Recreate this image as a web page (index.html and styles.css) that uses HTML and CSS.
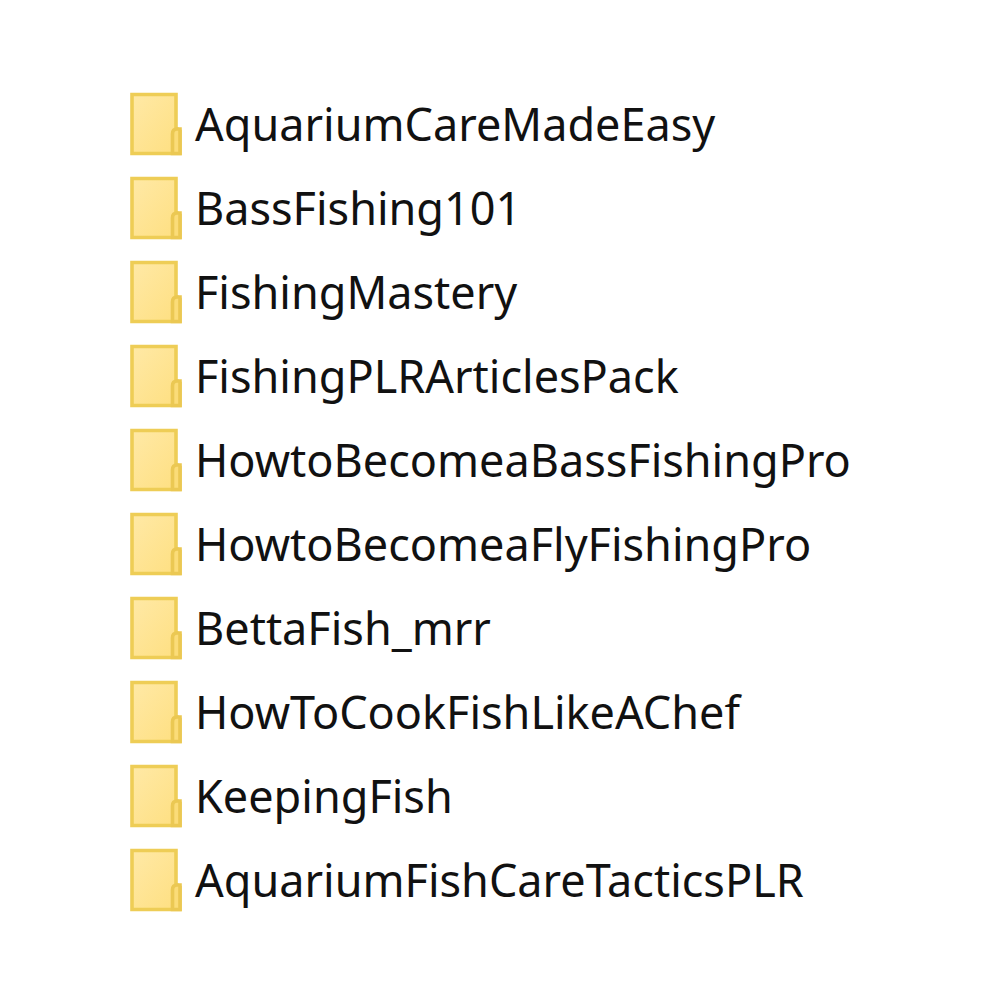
FILE: index.html
```
<!DOCTYPE html>
<html lang="en">
<head>
    <meta charset="UTF-8">
    <title>Folders</title>
    <link rel="stylesheet" href="styles.css">
</head>
<body>
    <!-- folder icon, reused by every row -->
    <svg class="sprite" aria-hidden="true">
        <defs>
            <linearGradient id="fill" x1="0" y1="0" x2="1" y2="1">
                <stop offset="0" stop-color="#ffe9a6"/>
                <stop offset="1" stop-color="#fedf80"/>
            </linearGradient>
            <symbol id="folder" viewBox="0 0 54 66">
                <path d="M3 3.5H47V37L51 40V62.500H3Z" fill="url(#fill)" stroke="#eecd56" stroke-width="3.600"/>
                <path d="M43.500 62.500V43Q43.500 38 48 38H51V62.500Z" fill="#fbdc78" stroke="#ebc853" stroke-width="3.600"/>
            </symbol>
        </defs>
    </svg>

    <ul class="folders">
        <li class="folder"><svg class="icon"><use href="#folder"/></svg><span>AquariumCareMadeEasy</span></li>
        <li class="folder"><svg class="icon"><use href="#folder"/></svg><span>BassFishing101</span></li>
        <li class="folder"><svg class="icon"><use href="#folder"/></svg><span>FishingMastery</span></li>
        <li class="folder"><svg class="icon"><use href="#folder"/></svg><span>FishingPLRArticlesPack</span></li>
        <li class="folder"><svg class="icon"><use href="#folder"/></svg><span>HowtoBecomeaBassFishingPro</span></li>
        <li class="folder"><svg class="icon"><use href="#folder"/></svg><span>HowtoBecomeaFlyFishingPro</span></li>
        <li class="folder"><svg class="icon"><use href="#folder"/></svg><span>BettaFish_mrr</span></li>
        <li class="folder"><svg class="icon"><use href="#folder"/></svg><span>HowToCookFishLikeAChef</span></li>
        <li class="folder"><svg class="icon"><use href="#folder"/></svg><span>KeepingFish</span></li>
        <li class="folder"><svg class="icon"><use href="#folder"/></svg><span>AquariumFishCareTacticsPLR</span></li>
    </ul>
</body>
</html>
```
FILE: styles.css
```
body {
    margin: 0;
    background: #fff;
    color: #111;
    font-family: "Noto Sans", "Open Sans", sans-serif;
}
.sprite {
    display: block;
    width: 0;
    height: 0;
}
.folders {
    list-style: none;
    margin: 0;
    padding: 82px 32px 82px 129px;
}
.folder {
    display: flex;
    align-items: center;
    gap: 12px;
    height: 84px;
    font-size: 45px;
    line-height: 60px;
}
.icon {
    flex: none;
    width: 54px;
    height: 66px;
}
```
